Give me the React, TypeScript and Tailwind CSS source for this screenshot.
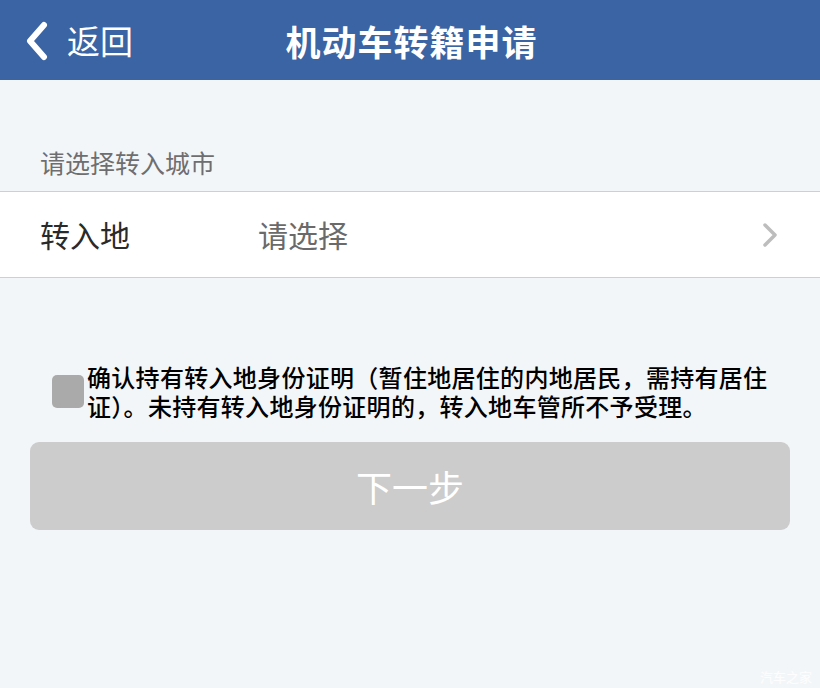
import React from "react";

export default function App() {
  return (
    <div
      className="w-[820px] h-[688px] bg-[#f3f6f8] relative overflow-hidden"
      style={{ fontFamily: '"Noto Sans CJK SC", "Noto Sans", sans-serif' }}
    >
      {/* Header */}
      <div className="h-[80px] bg-[#3a64a3] flex items-center relative">
        <div className="flex items-center pl-[24px]">
          <svg width="26" height="40" viewBox="0 0 26 40" className="mt-[1px]">
            <path d="M20 4 L6 20 L20 36" stroke="#fff" strokeWidth="6" fill="none" strokeLinecap="round" strokeLinejoin="round" />
          </svg>
          <span className="ml-[17px] text-white text-[33px] leading-none">返回</span>
        </div>
        <div className="absolute left-0 right-0 top-0 h-[80px] flex items-center justify-center pointer-events-none">
          <span className="text-white text-[35px] font-bold leading-none tracking-[1px] pl-[3px]">机动车转籍申请</span>
        </div>
      </div>

      {/* Section label */}
      <div className="pt-[66px] pb-[13px] pl-[40px] text-[25px] leading-[32px] text-[#6e6e70]">
        请选择转入城市
      </div>

      {/* Row */}
      <div className="h-[87px] bg-white border-y border-[#cfcfd1] flex items-center pl-[40px] pr-[42px]">
        <span className="w-[218px] text-[30px] text-[#2a2a2a]">转入地</span>
        <span className="flex-1 text-[30px] text-[#6a6a6a]">请选择</span>
        <svg width="16" height="24" viewBox="0 0 16 24">
          <path d="M3 2 L13 12 L3 22" stroke="#bdbdbd" strokeWidth="3.5" fill="none" strokeLinecap="round" strokeLinejoin="round" />
        </svg>
      </div>

      {/* Agreement */}
      <div className="flex items-center pl-[52px] mt-[84px]">
        <div className="w-[32px] h-[33px] rounded-[5px] bg-[#aaaaaa] shrink-0" />
        <p className="ml-[3px] w-[690px] text-[24px] leading-[29px] tracking-[0.3px] text-black font-medium">
          确认持有转入地身份证明（暂住地居住的内地居民，需持有居住证）。未持有转入地身份证明的，转入地车管所不予受理。
        </p>
      </div>

      {/* Button */}
      <div className="px-[30px] mt-[22px]">
        <div className="h-[88px] rounded-[9px] bg-[#cccccc] flex items-center justify-center">
          <span className="text-white text-[36px] leading-none">下一步</span>
        </div>
      </div>

      {/* Watermark */}
      <div className="absolute right-[8px] bottom-[2px] text-[13px] text-white/80">汽车之家</div>
    </div>
  );
}
